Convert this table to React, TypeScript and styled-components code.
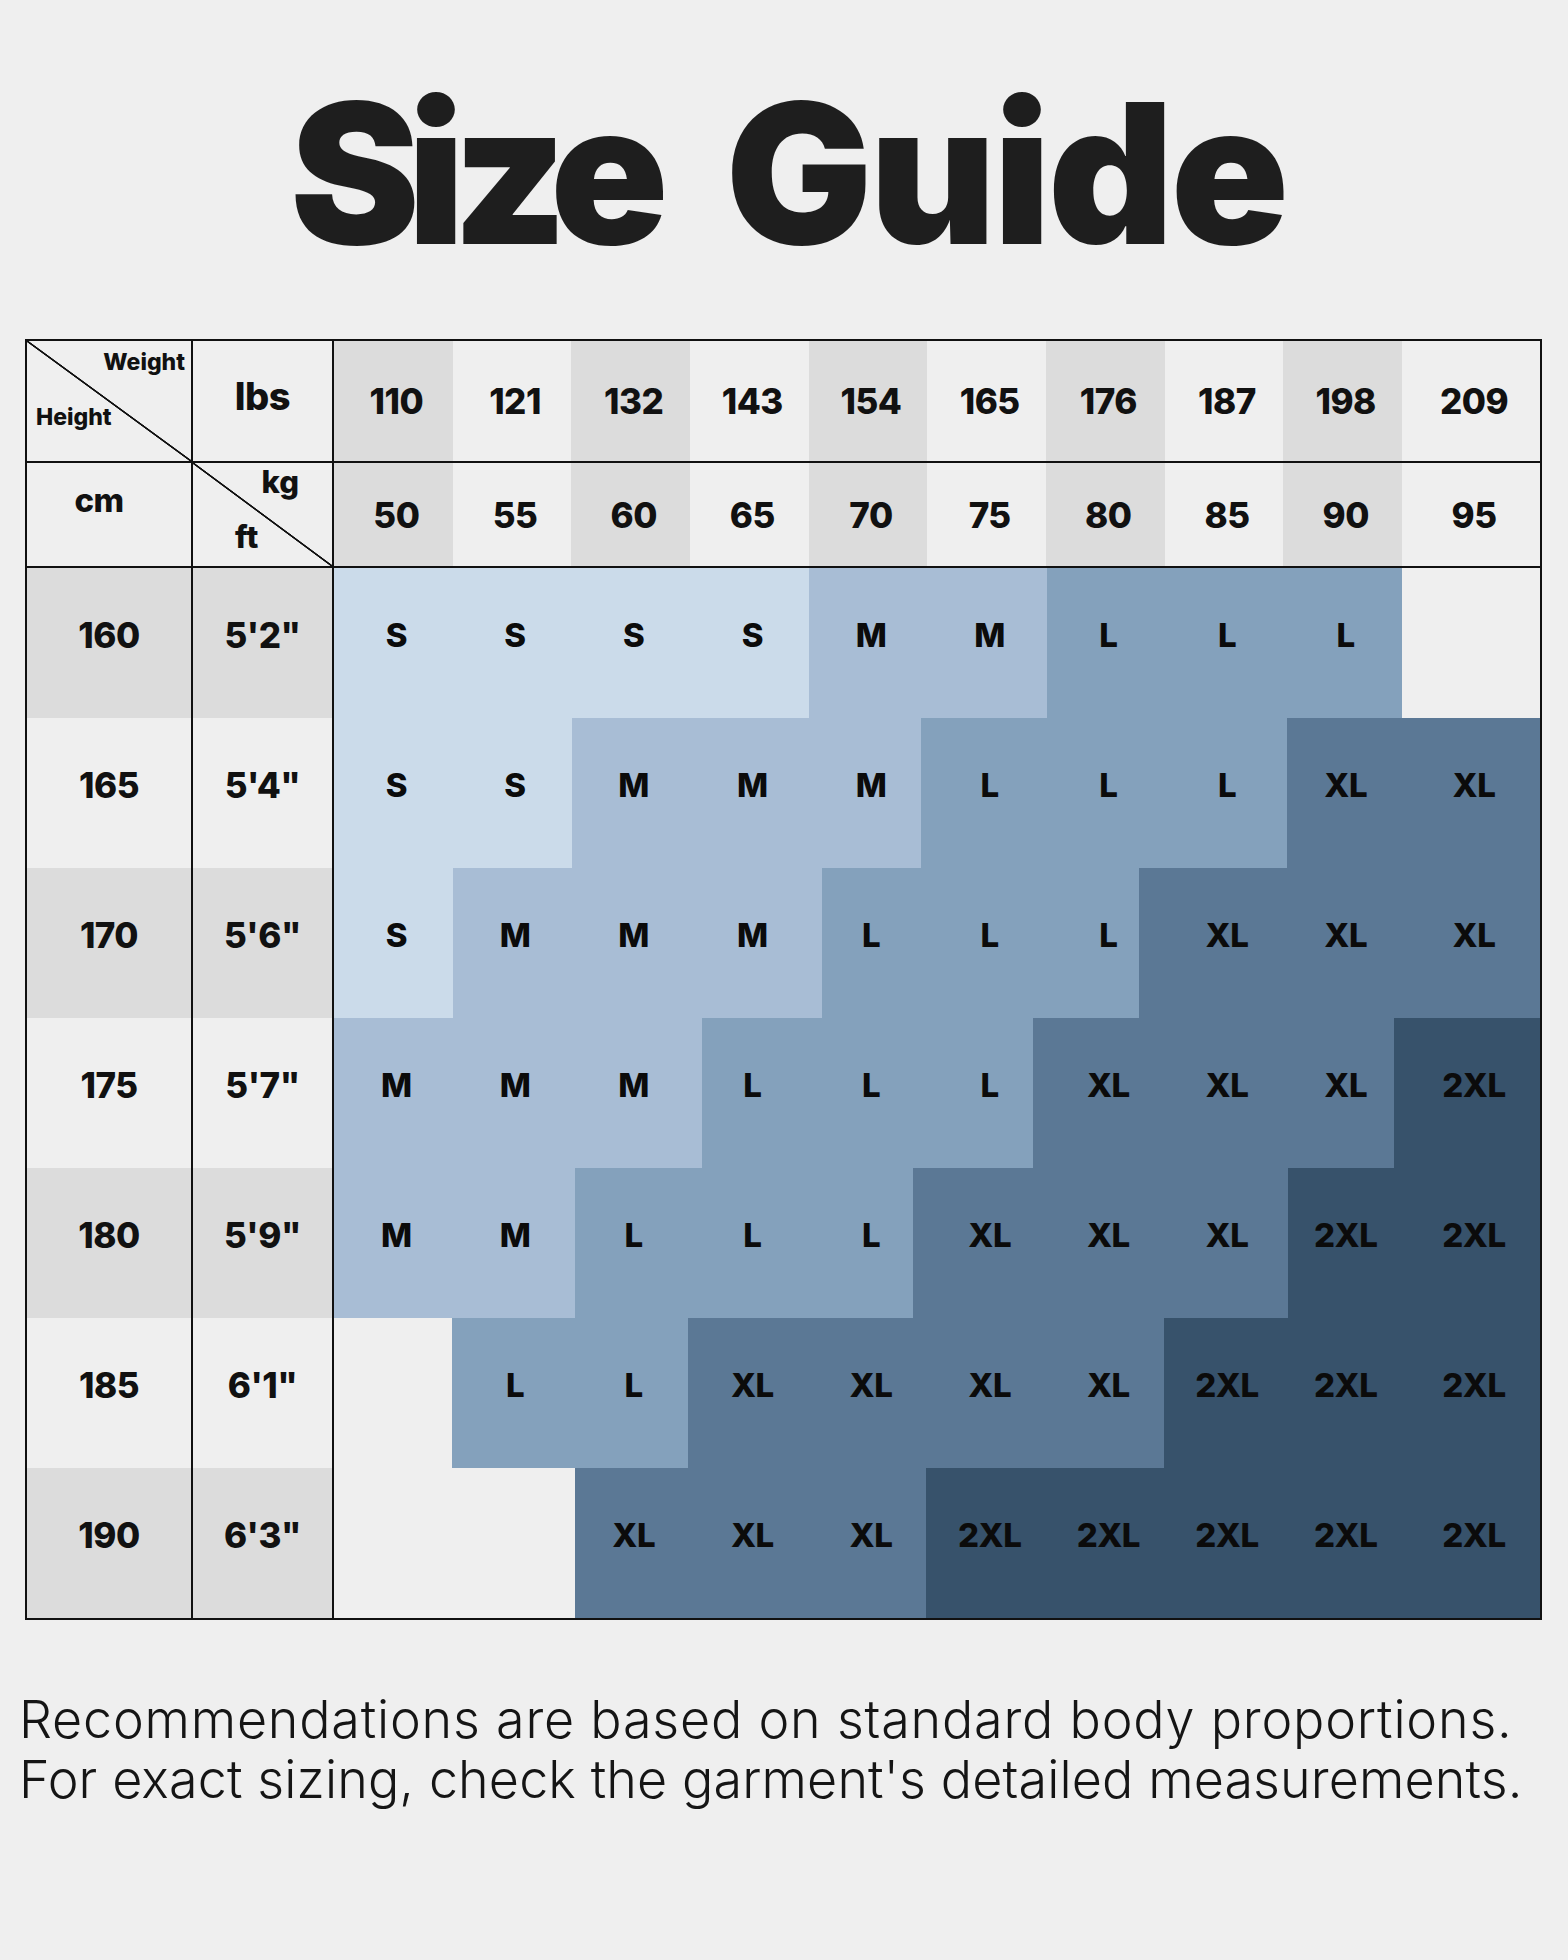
import React from 'react';
import styled, { createGlobalStyle } from 'styled-components';

type Size = 'S' | 'M' | 'L' | 'XL' | '2XL' | '';

const tones: Record<string, string> = {
  S: '#cbdbea',
  M: '#a8bdd5',
  L: '#84a1bc',
  XL: '#5b7895',
  '2XL': '#37526b',
  '': '#efefef',
};

const lbs = [110, 121, 132, 143, 154, 165, 176, 187, 198, 209];
const kg = [50, 55, 60, 65, 70, 75, 80, 85, 90, 95];

interface BodyRow {
  cm: number;
  ft: string;
  shaded: boolean;
  bands: [Size, number][];
  sizes: Size[];
}

const rows: BodyRow[] = [
  {
    cm: 160, ft: `5'2"`, shaded: true,
    bands: [['S', 475], ['M', 238], ['L', 355], ['', 138]],
    sizes: ['S', 'S', 'S', 'S', 'M', 'M', 'L', 'L', 'L', ''],
  },
  {
    cm: 165, ft: `5'4"`, shaded: false,
    bands: [['S', 238], ['M', 349], ['L', 366], ['XL', 253]],
    sizes: ['S', 'S', 'M', 'M', 'M', 'L', 'L', 'L', 'XL', 'XL'],
  },
  {
    cm: 170, ft: `5'6"`, shaded: true,
    bands: [['S', 119], ['M', 369], ['L', 317], ['XL', 401]],
    sizes: ['S', 'M', 'M', 'M', 'L', 'L', 'L', 'XL', 'XL', 'XL'],
  },
  {
    cm: 175, ft: `5'7"`, shaded: false,
    bands: [['M', 368], ['L', 331], ['XL', 361], ['2XL', 146]],
    sizes: ['M', 'M', 'M', 'L', 'L', 'L', 'XL', 'XL', 'XL', '2XL'],
  },
  {
    cm: 180, ft: `5'9"`, shaded: true,
    bands: [['M', 241], ['L', 338], ['XL', 375], ['2XL', 252]],
    sizes: ['M', 'M', 'L', 'L', 'L', 'XL', 'XL', 'XL', '2XL', '2XL'],
  },
  {
    cm: 185, ft: `6'1"`, shaded: false,
    bands: [['', 118], ['L', 236], ['XL', 476], ['2XL', 376]],
    sizes: ['', 'L', 'L', 'XL', 'XL', 'XL', 'XL', '2XL', '2XL', '2XL'],
  },
  {
    cm: 190, ft: `6'3"`, shaded: true,
    bands: [['', 241], ['XL', 351], ['2XL', 614]],
    sizes: ['', '', 'XL', 'XL', 'XL', '2XL', '2XL', '2XL', '2XL', '2XL'],
  },
];

const Global = createGlobalStyle`
  html, body { margin: 0; padding: 0; background: #efefef; }
  body { font-family: Inter, "Noto Sans", sans-serif; color: #111; }
  * { box-sizing: border-box; }
`;

const Page = styled.div`
  width: 1568px;
  min-height: 1960px;
  padding-top: 76px;
  background: #efefef;
`;

const Title = styled.h1`
  margin: 0;
  padding-left: 5px;
  display: flex;
  justify-content: center;
  gap: 82px;
  font-family: Inter, "Noto Sans", sans-serif;
  font-weight: 900;
  font-size: 195px;
  line-height: 1;
  color: #1e1e1e;
`;

const TitleWord = styled.span<{ $ls: number }>`
  letter-spacing: ${(p) => p.$ls}px;
  margin-right: ${(p) => p.$ls}px;
`;

const Table = styled.div`
  margin: 68px 0 0 25px;
  width: 1517px;
  border: 2px solid #111;
  display: flex;
  flex-direction: column;
`;

const HeadRow = styled.div<{ $h: number }>`
  display: grid;
  grid-template-columns: 166px 141px 1fr;
  height: ${(p) => p.$h}px;
  border-bottom: 2px solid #111;
`;

const BodyRowBox = styled.div`
  display: grid;
  grid-template-columns: 166px 141px 1fr;
  height: 150px;
`;

const DataGrid = styled.div`
  display: grid;
  grid-template-columns: repeat(9, 1fr) 138px;
`;

const HeadNum = styled.div<{ $shade: boolean }>`
  display: flex;
  align-items: center;
  justify-content: center;
  padding-left: 6px;
  background: ${(p) => (p.$shade ? '#dcdcdc' : '#efefef')};
  font-weight: 800;
  font-size: 35px;
  letter-spacing: -0.5px;
  color: #111;
`;

const LabelCell = styled.div<{ $shade?: boolean; $pb?: number; $pr?: number; $size?: number }>`
  display: flex;
  align-items: center;
  justify-content: center;
  border-right: 2px solid #111;
  background: ${(p) => (p.$shade ? '#dcdcdc' : '#efefef')};
  font-weight: 800;
  font-size: ${(p) => p.$size ?? 35}px;
  padding-bottom: ${(p) => p.$pb ?? 0}px;
  padding-right: ${(p) => p.$pr ?? 0}px;
  letter-spacing: -0.5px;
  color: #111;
`;

const DiagonalCell = styled.div<{ $pad: string; $gap: number; $size: number }>`
  display: flex;
  flex-direction: column;
  border-right: 2px solid #111;
  padding: ${(p) => p.$pad};
  gap: ${(p) => p.$gap}px;
  font-weight: 800;
  font-size: ${(p) => p.$size}px;
  line-height: 1.2;
  background:
    linear-gradient(
      to top right,
      transparent calc(50% - 1.2px),
      #111 calc(50% - 0.6px),
      #111 calc(50% + 0.6px),
      transparent calc(50% + 1.2px)
    ),
    #efefef;
`;

const TopLabel = styled.span<{ $mr?: number }>`
  align-self: flex-end;
  margin-right: ${(p) => p.$mr ?? 0}px;
`;

const BottomLabel = styled.span<{ $ml?: number }>`
  align-self: flex-start;
  margin-left: ${(p) => p.$ml ?? 0}px;
`;

const DataArea = styled.div`
  display: grid;
`;

const BandStrip = styled.div`
  grid-area: 1 / 1;
  display: flex;
`;

const Band = styled.div<{ $tone: string; $w: number }>`
  flex: 0 0 ${(p) => p.$w}px;
  background: ${(p) => p.$tone};
`;

const SizeGrid = styled(DataGrid)`
  grid-area: 1 / 1;
`;

const SizeCell = styled.div`
  display: flex;
  align-items: center;
  justify-content: center;
  padding-bottom: 16px;
  padding-left: 6px;
  font-weight: 800;
  font-size: 33px;
  letter-spacing: -0.5px;
  color: #0b0b0b;
`;

const Footer = styled.p`
  margin: 70px 0 0;
  padding-left: 19px;
  font-family: Inter, "Noto Sans", sans-serif;
  font-weight: 300;
  font-size: 52px;
  line-height: 60px;
  color: #151515;
`;

const FooterLine = styled.span<{ $ls: number }>`
  display: block;
  letter-spacing: ${(p) => p.$ls}px;
  white-space: nowrap;
`;

export default function App() {
  return (
    <Page>
      <Global />
      <Title>
        <TitleWord $ls={-12.5}>Size</TitleWord>
        <TitleWord $ls={-3}>Guide</TitleWord>
      </Title>
      <Table>
        <HeadRow $h={122}>
          <DiagonalCell $pad="8px 6px 0 9px" $gap={27} $size={23}>
            <TopLabel>Weight</TopLabel>
            <BottomLabel>Height</BottomLabel>
          </DiagonalCell>
          <LabelCell $pb={10} $size={38}>lbs</LabelCell>
          <DataGrid>
            {lbs.map((v, i) => (
              <HeadNum key={v} $shade={i % 2 === 0}>{v}</HeadNum>
            ))}
          </DataGrid>
        </HeadRow>
        <HeadRow $h={105}>
          <LabelCell $pb={30} $pr={20} $size={33}>cm</LabelCell>
          <DiagonalCell $pad="0 0 0 0" $gap={18} $size={31}>
            <TopLabel $mr={33}>kg</TopLabel>
            <BottomLabel $ml={42}>ft</BottomLabel>
          </DiagonalCell>
          <DataGrid>
            {kg.map((v, i) => (
              <HeadNum key={v} $shade={i % 2 === 0}>{v}</HeadNum>
            ))}
          </DataGrid>
        </HeadRow>
        {rows.map((r) => (
          <BodyRowBox key={r.cm}>
            <LabelCell $shade={r.shaded} $pb={16}>{r.cm}</LabelCell>
            <LabelCell $shade={r.shaded} $pb={16}>{r.ft}</LabelCell>
            <DataArea>
              <BandStrip>
                {r.bands.map(([s, w], i) => (
                  <Band key={i} $tone={tones[s]} $w={w} />
                ))}
              </BandStrip>
              <SizeGrid>
                {r.sizes.map((s, i) => (
                  <SizeCell key={i}>{s}</SizeCell>
                ))}
              </SizeGrid>
            </DataArea>
          </BodyRowBox>
        ))}
      </Table>
      <Footer>
        <FooterLine $ls={0.8}>Recommendations are based on standard body proportions.</FooterLine>
        <FooterLine $ls={0.13}>For exact sizing, check the garment's detailed measurements.</FooterLine>
      </Footer>
    </Page>
  );
}
